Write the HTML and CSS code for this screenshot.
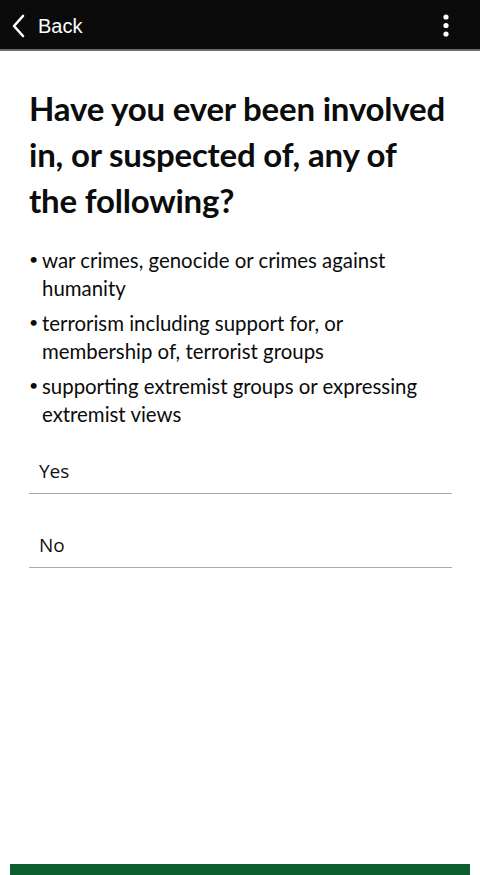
FILE: index.html
```html
<!DOCTYPE html>
<html lang="en">
<head>
<meta charset="utf-8">
<title>Question</title>
<link rel="stylesheet" href="styles.css">
</head>
<body>
<div class="screen">
  <header class="topbar">
    <a class="back" href="#">
      <svg class="chev" width="14" height="24" viewBox="0 0 14 24"><path d="M12 2 L3 12 L12 22" fill="none" stroke="#fff" stroke-width="2.6" stroke-linecap="round" stroke-linejoin="round"/></svg>
      <span>Back</span>
    </a>
    <svg class="more" width="8" height="26" viewBox="0 0 8 26"><circle cx="4" cy="4" r="2.6" fill="#fff"/><circle cx="4" cy="12.5" r="2.6" fill="#fff"/><circle cx="4" cy="21" r="2.6" fill="#fff"/></svg>
  </header>
  <main class="content">
    <h1 class="title">Have you ever been involved in, or suspected of, any of the following?</h1>
    <ul class="list">
      <li>war crimes, genocide or crimes against humanity</li>
      <li>terrorism including support for, or membership of, terrorist groups</li>
      <li>supporting extremist groups or expressing extremist views</li>
    </ul>
    <div class="options">
      <div class="option">Yes</div>
      <div class="option">No</div>
    </div>
  </main>
  <div class="spacer"></div>
  <div class="button"></div>
</div>
</body>
</html>
```
FILE: styles.css
```css
html, body {
  margin: 0;
  padding: 0;
  background: #fff;
}
.screen {
  width: 480px;
  height: 875px;
  display: flex;
  flex-direction: column;
  overflow: hidden;
}
.topbar {
  height: 51px;
  box-sizing: border-box;
  padding: 3px 30px 0 11px;
  background: #0b0b0b;
  border-bottom: 2px solid #6b6b6b;
  display: flex;
  align-items: center;
  justify-content: space-between;
  flex: none;
}
.back {
  display: flex;
  align-items: center;
  gap: 13px;
  color: #fff;
  text-decoration: none;
  font-family: "Liberation Sans", Arial, sans-serif;
  font-size: 20px;
}
.content {
  padding: 0 28px 0 29px;
}
.title {
  margin: 34px 0 0;
  max-width: 419px;
  font-family: Lato, "Open Sans", sans-serif;
  font-weight: 700;
  font-size: 33px;
  line-height: 46px;
  color: #0b0c0c;
  letter-spacing: -0.2px;
}
.list {
  list-style: none;
  margin: 23px 0 0;
  padding: 0;
  font-family: Lato, "Open Sans", sans-serif;
  font-size: 20.4px;
  line-height: 28px;
  color: #0b0c0c;
}
.list li {
  position: relative;
  padding-left: 13px;
  margin-bottom: 7px;
}
.list li::before {
  content: "•";
  position: absolute;
  left: 0;
  top: -1px;
  font-size: 16px;
}
.option {
  box-sizing: border-box;
  height: 59px;
  padding: 23px 0 8px 10px;
  line-height: 26px;
  border-bottom: 1.5px solid #aaaaaa;
  font-family: "Open Sans", "Noto Sans", sans-serif;
  font-size: 19px;
  color: #111;
}
.option + .option {
  height: 74px;
  padding-top: 38px;
}
.spacer { flex: 1; }
.button {
  height: 11px;
  margin: 0 10px;
  background: #0f5e2f;
  flex: none;
}
```
